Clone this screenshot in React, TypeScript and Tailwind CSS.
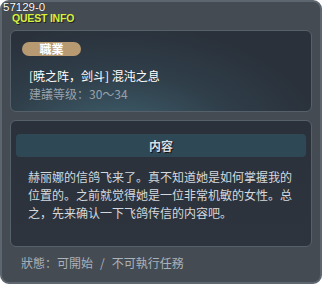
import React from 'react';

const cjk = "font-['Noto_Sans_CJK_SC','Noto_Sans',sans-serif]";

const App: React.FC = () => {
    return (
        <div className="w-[322px] h-[284px] bg-white">
            <div className="relative w-[322px] h-[284px] rounded-[9px] border-2 border-[#5d656e] bg-[#444b53] flex flex-col">
                {/* Header ids */}
                <div className="absolute left-[1px] top-[-2px] text-[11.5px] leading-[14px] text-white font-['Liberation_Sans',sans-serif] [text-shadow:0_0_1px_#000]">
                    57129-0
                </div>
                <div className="pl-[10px] pt-[10px] h-[28px] text-[10.5px] leading-[12px] font-bold tracking-[-0.2px] text-[#d8f03c] font-['Liberation_Sans',sans-serif] [text-shadow:1px_1px_0_#1d2228]">
                    QUEST INFO
                </div>

                {/* Job / title panel */}
                <div className="mx-[8px] h-[82px] rounded-[6px] border border-[#56606a] bg-[radial-gradient(ellipse_at_35%_140%,#416573_0%,#2f3e49_45%,#2a313b_75%)] pl-[11px] pt-[11px]">
                    <div className={`w-[59px] h-[14px] rounded-full bg-[#b89a72] flex items-center justify-center text-[12px] leading-[14px] font-bold text-white ${cjk}`}>
                        職業
                    </div>
                    <div className={`mt-[12px] pl-[7px] text-[12px] leading-[16px] text-white ${cjk}`}>
                        [暁之阵，剑斗] 混沌之息
                    </div>
                    <div className={`mt-[2px] pl-[7px] text-[12px] leading-[16px] text-[#98a1aa] ${cjk}`}>
                        建議等级：30～34
                    </div>
                </div>

                {/* Content panel */}
                <div className="mx-[8px] mt-[8px] h-[127px] rounded-[6px] border border-[#56606a] bg-[linear-gradient(#2a313b,#2e343d)] pt-[13px] px-[5px]">
                    <div className={`h-[23px] rounded-[4px] bg-[#2f4856] flex items-center justify-center text-[12px] font-bold text-[#d6dde3] [text-shadow:1px_1px_0_#111] ${cjk}`}>
                        内容
                    </div>
                    <div className={`mt-[11px] pl-[12px] w-[279px] text-[12px] leading-[18px] text-[#d4d9de] ${cjk}`}>
                        赫丽娜的信鸽飞来了。真不知道她是如何掌握我的位置的。之前就觉得她是一位非常机敏的女性。总之，先来确认一下飞鸽传信的内容吧。
                    </div>
                </div>

                {/* Status */}
                <div className={`pl-[19px] mt-[8px] text-[12px] leading-[16px] text-[#aab2ba] ${cjk}`}>
                    狀態：可開始<span className="mx-[7px]">/</span>不可執行任務
                </div>
            </div>
        </div>
    );
};

export default App;
